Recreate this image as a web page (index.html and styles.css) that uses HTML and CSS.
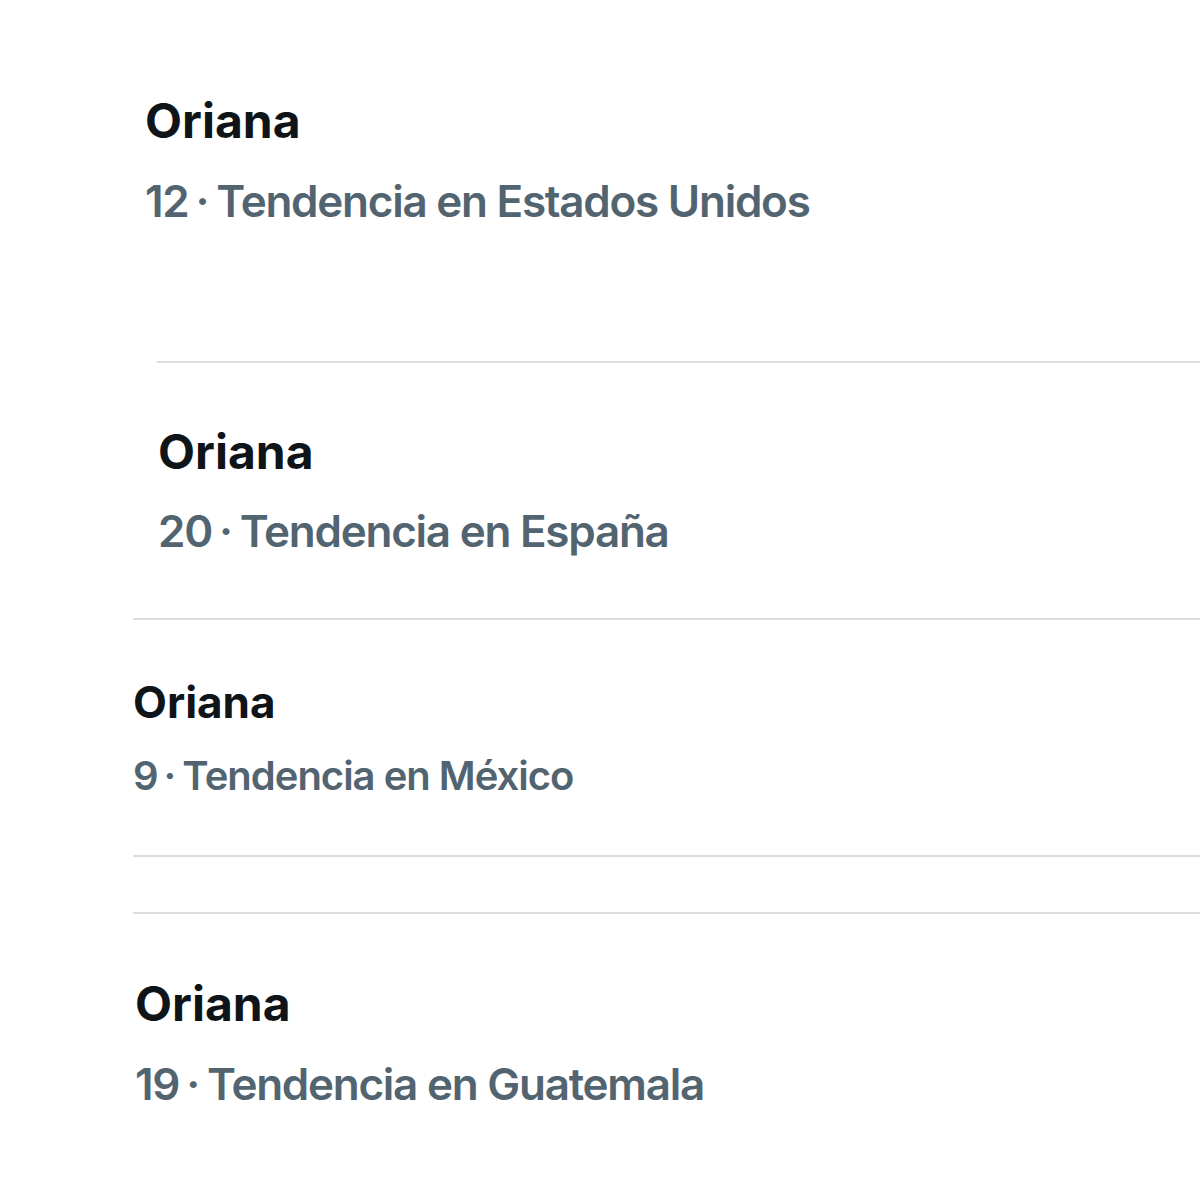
FILE: index.html
```html
<!DOCTYPE html>
<html lang="es">
<head>
<meta charset="utf-8">
<title>Oriana tendencias</title>
<link rel="stylesheet" href="styles.css">
</head>
<body>
<main class="collage">
  <section class="trend trend-us">
    <div class="trend-title">Oriana</div>
    <div class="trend-meta">12<span class="dot">·</span>Tendencia en Estados Unidos</div>
  </section>
  <section class="trend trend-es">
    <div class="trend-title">Oriana</div>
    <div class="trend-meta">20<span class="dot">·</span>Tendencia en España</div>
  </section>
  <section class="trend trend-mx">
    <div class="trend-title">Oriana</div>
    <div class="trend-meta">9<span class="dot">·</span>Tendencia en México</div>
  </section>
  <section class="trend trend-gt">
    <div class="trend-title">Oriana</div>
    <div class="trend-meta">19<span class="dot">·</span>Tendencia en Guatemala</div>
  </section>
</main>
</body>
</html>
```
FILE: styles.css
```css
html, body {
  margin: 0;
  padding: 0;
  background: #ffffff;
}
.collage {
  width: 1200px;
  height: 1200px;
  overflow: hidden;
  display: flex;
  flex-direction: column;
  font-family: "Inter", "Roboto", "Liberation Sans", sans-serif;
}
.trend {
  display: flex;
  flex-direction: column;
  box-sizing: border-box;
}
.trend-title {
  color: #0f1419;
  font-weight: 700;
  line-height: 1;
}
.trend-meta {
  color: #536471;
  font-weight: 600;
  line-height: 1;
  letter-spacing: -1.25px;
}
.dot {
  display: inline-block;
  margin: 0 8px 0 7px;
}
.trend-us {
  height: 361px;
  padding: 97px 0 0 145px;
}
.trend-us .trend-title { font-size: 48px; }
.trend-us .trend-meta { font-size: 44px; margin-top: 34px; }

.trend-es {
  height: 257px;
  margin-left: 157px;
  border-top: 2px solid #dcdcdc;
  padding: 65px 0 0 1px;
}
.trend-es .trend-title { font-size: 48px; }
.trend-es .trend-meta { font-size: 44px; margin-top: 33px; }

.trend-mx {
  height: 239px;
  margin-left: 133px;
  border-top: 2px solid #dcdcdc;
  border-bottom: 2px solid #dcdcdc;
  padding: 60px 0 0 0;
}
.trend-mx .trend-title { font-size: 44px; }
.trend-mx .trend-meta { font-size: 40px; margin-top: 32px; letter-spacing: -1px; }
.trend-mx .dot { margin: 0 7px 0 6px; }

.trend-gt {
  margin-top: 55px;
  margin-left: 133px;
  border-top: 2px solid #dcdcdc;
  padding: 66px 0 0 2px;
}
.trend-gt .trend-title { font-size: 48px; }
.trend-gt .trend-meta { font-size: 44px; margin-top: 34px; }
```
